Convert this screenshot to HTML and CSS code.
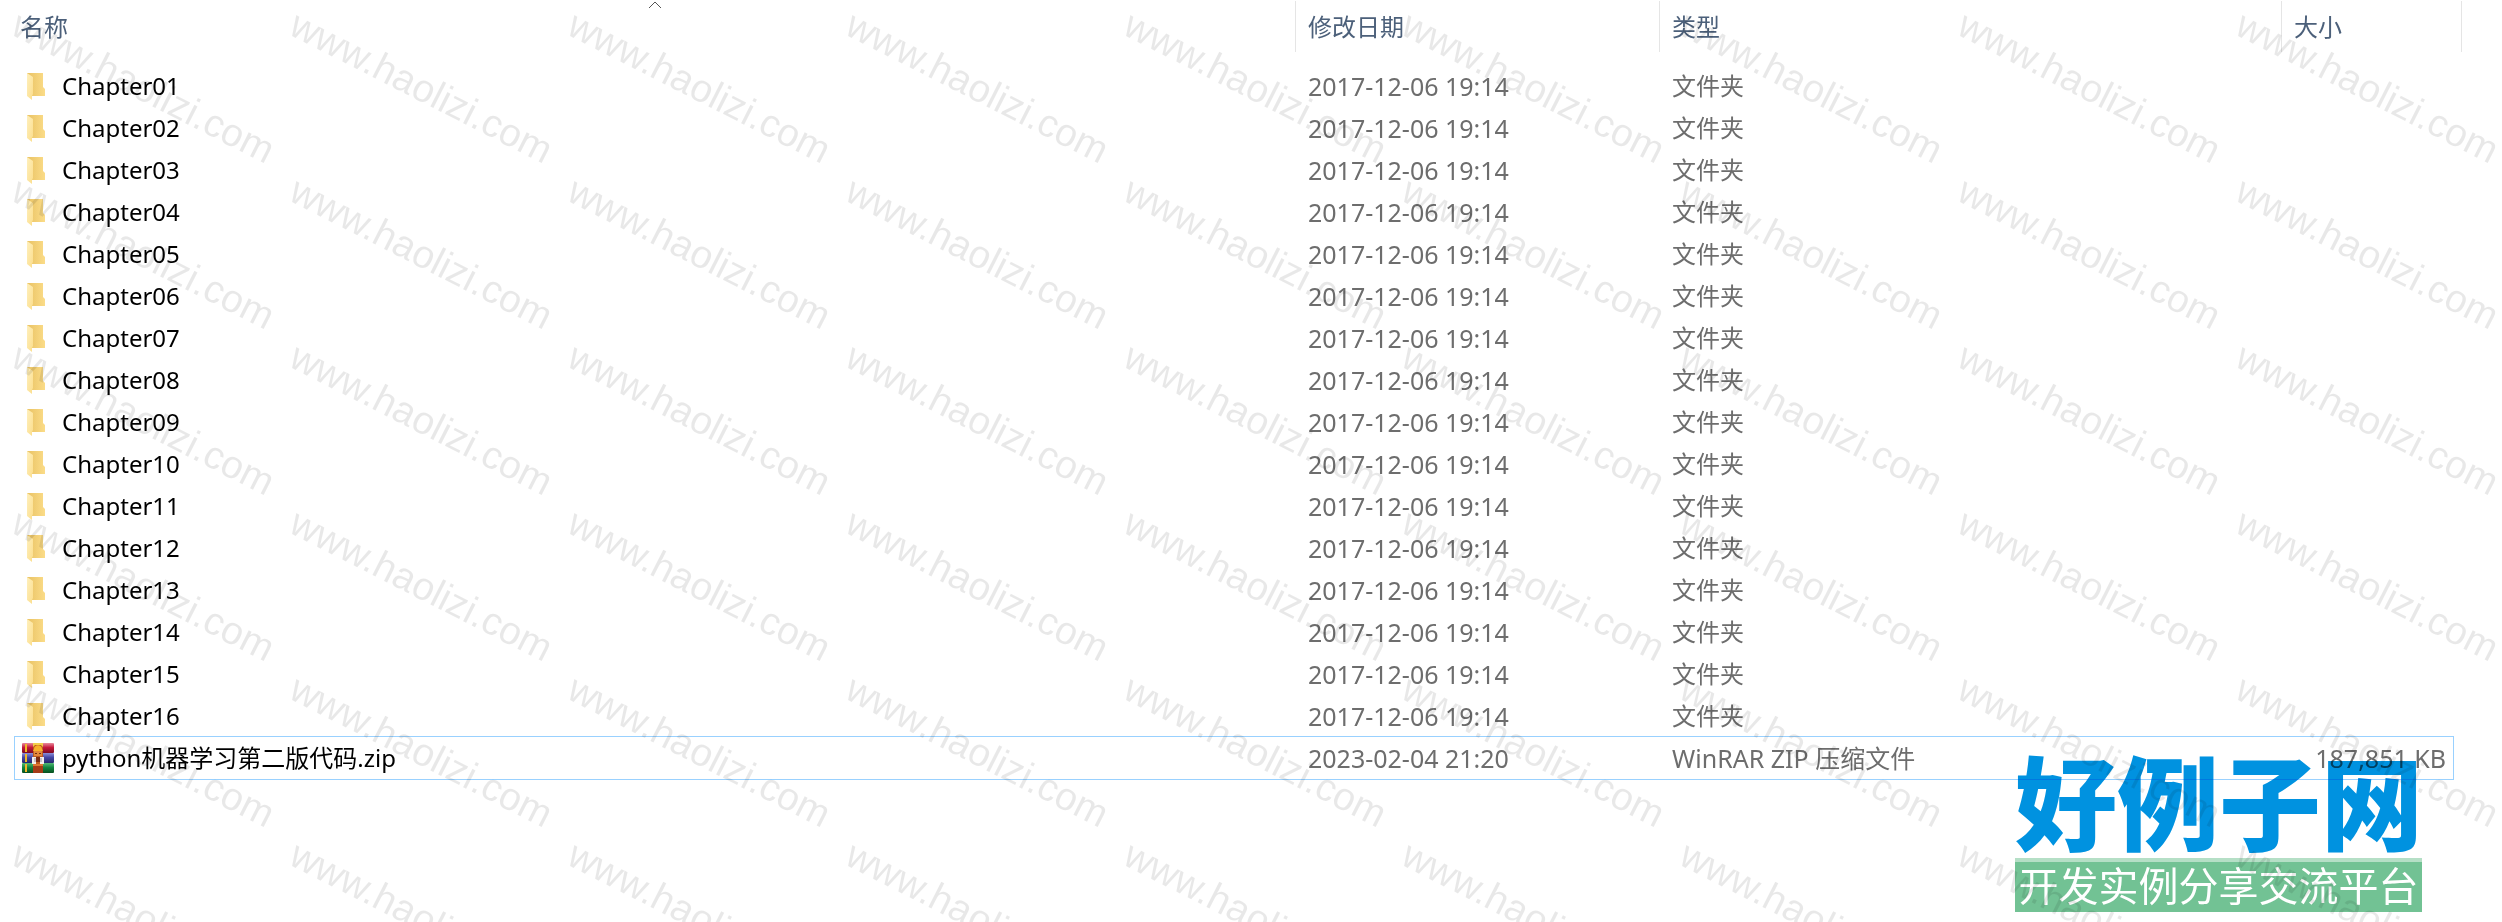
FILE: index.html
```html
<!DOCTYPE html>
<html lang="zh-CN">
<head>
    <meta charset="UTF-8">
    <meta name="viewport" content="width=device-width, initial-scale=1.0">
    <title>python机器学习第二版代码</title>
    <link rel="stylesheet" href="styles.css">
</head>
<body>

    <!-- Shared icons -->
    <svg class="icon-defs" aria-hidden="true">
        <defs>
            <linearGradient id="folderBack" x1="0" y1="0" x2="1" y2="0">
                <stop offset="0" stop-color="#e9c263"/>
                <stop offset="1" stop-color="#fbdc88"/>
            </linearGradient>
            <linearGradient id="folderFront" x1="0" y1="0" x2="1" y2="1">
                <stop offset="0" stop-color="#fff0bd"/>
                <stop offset="1" stop-color="#fbdd8b"/>
            </linearGradient>
            <linearGradient id="bookRed" x1="0" y1="0" x2="0" y2="1">
                <stop offset="0" stop-color="#e98a9c"/>
                <stop offset="0.45" stop-color="#c4183c"/>
                <stop offset="1" stop-color="#7c0a22"/>
            </linearGradient>
            <linearGradient id="bookBlue" x1="0" y1="0" x2="0" y2="1">
                <stop offset="0" stop-color="#8c8fd8"/>
                <stop offset="0.45" stop-color="#4447a5"/>
                <stop offset="1" stop-color="#25276c"/>
            </linearGradient>
            <linearGradient id="bookGreen" x1="0" y1="0" x2="0" y2="1">
                <stop offset="0" stop-color="#56b877"/>
                <stop offset="0.45" stop-color="#12853f"/>
                <stop offset="1" stop-color="#07501f"/>
            </linearGradient>
        </defs>
        <symbol id="folder" viewBox="0 0 32 32">
            <path d="M5 3h16v14l2 2v7H5z" fill="url(#folderBack)"/>
            <path d="M5 3l6 4v17l-1 2v4l-5-4z" fill="url(#folderFront)"/>
        </symbol>
        <symbol id="archive" viewBox="0 0 32 32">
            <rect x="0" y="1" width="32" height="10" rx="1" fill="url(#bookRed)"/>
            <rect x="0" y="11" width="32" height="10" rx="1" fill="url(#bookBlue)"/>
            <rect x="0" y="21" width="32" height="10" rx="1" fill="url(#bookGreen)"/>
            <path d="M3 2h2v8H3zM3 12h2v8H3zM3 22h2v8H3z" fill="#f2b728"/>
            <rect x="11" y="1" width="10" height="30" fill="#bd5a20"/>
            <path d="M11 1h10v4l-2-2h-6l-2 2z" fill="#f3cf4b"/>
            <path d="M12 7c0-5 8-5 8 0l1 2H11z" fill="#f6b02c"/>
            <rect x="12" y="9" width="8" height="5" fill="#e3873a"/>
            <path d="M13 11h2v1h-2zM17 11h2v1h-2z" fill="#6f2c10"/>
            <path d="M10 15h4v7h-4zM18 15h4v7h-4z" fill="#f3efec"/>
            <path d="M14 15h4v5h-4z" fill="#7c2c13"/>
            <path d="M12 16h2v4h-2zM18 16h2v4h-2z" fill="#c8c2c8"/>
            <path d="M11 22h10v2H11z" fill="#e07830"/>
            <path d="M11 24h10v7H11z" fill="#a53c17"/>
        </symbol>
    </svg>

    <!-- File list -->
    <table class="file-list">
        <colgroup>
            <col>
            <col class="col-date">
            <col class="col-type">
            <col class="col-size">
        </colgroup>
        <thead>
            <tr>
                <th class="sorted" aria-sort="ascending">
                    <button class="column-button" type="button">名称</button>
                    <svg class="sort-arrow" viewBox="0 0 14 8" aria-hidden="true"><path d="M1 7l6-6 6 6" fill="none" stroke="#555" stroke-width="1"/></svg>
                </th>
                <th><button class="column-button" type="button">修改日期</button></th>
                <th><button class="column-button" type="button">类型</button></th>
                <th><button class="column-button" type="button">大小</button></th>
            </tr>
        </thead>
        <tbody>
            <tr>
                <td><div class="name"><svg class="icon"><use href="#folder"/></svg>Chapter01</div></td>
                <td>2017-12-06 19:14</td><td class="type">文件夹</td><td></td>
            </tr>
            <tr>
                <td><div class="name"><svg class="icon"><use href="#folder"/></svg>Chapter02</div></td>
                <td>2017-12-06 19:14</td><td class="type">文件夹</td><td></td>
            </tr>
            <tr>
                <td><div class="name"><svg class="icon"><use href="#folder"/></svg>Chapter03</div></td>
                <td>2017-12-06 19:14</td><td class="type">文件夹</td><td></td>
            </tr>
            <tr>
                <td><div class="name"><svg class="icon"><use href="#folder"/></svg>Chapter04</div></td>
                <td>2017-12-06 19:14</td><td class="type">文件夹</td><td></td>
            </tr>
            <tr>
                <td><div class="name"><svg class="icon"><use href="#folder"/></svg>Chapter05</div></td>
                <td>2017-12-06 19:14</td><td class="type">文件夹</td><td></td>
            </tr>
            <tr>
                <td><div class="name"><svg class="icon"><use href="#folder"/></svg>Chapter06</div></td>
                <td>2017-12-06 19:14</td><td class="type">文件夹</td><td></td>
            </tr>
            <tr>
                <td><div class="name"><svg class="icon"><use href="#folder"/></svg>Chapter07</div></td>
                <td>2017-12-06 19:14</td><td class="type">文件夹</td><td></td>
            </tr>
            <tr>
                <td><div class="name"><svg class="icon"><use href="#folder"/></svg>Chapter08</div></td>
                <td>2017-12-06 19:14</td><td class="type">文件夹</td><td></td>
            </tr>
            <tr>
                <td><div class="name"><svg class="icon"><use href="#folder"/></svg>Chapter09</div></td>
                <td>2017-12-06 19:14</td><td class="type">文件夹</td><td></td>
            </tr>
            <tr>
                <td><div class="name"><svg class="icon"><use href="#folder"/></svg>Chapter10</div></td>
                <td>2017-12-06 19:14</td><td class="type">文件夹</td><td></td>
            </tr>
            <tr>
                <td><div class="name"><svg class="icon"><use href="#folder"/></svg>Chapter11</div></td>
                <td>2017-12-06 19:14</td><td class="type">文件夹</td><td></td>
            </tr>
            <tr>
                <td><div class="name"><svg class="icon"><use href="#folder"/></svg>Chapter12</div></td>
                <td>2017-12-06 19:14</td><td class="type">文件夹</td><td></td>
            </tr>
            <tr>
                <td><div class="name"><svg class="icon"><use href="#folder"/></svg>Chapter13</div></td>
                <td>2017-12-06 19:14</td><td class="type">文件夹</td><td></td>
            </tr>
            <tr>
                <td><div class="name"><svg class="icon"><use href="#folder"/></svg>Chapter14</div></td>
                <td>2017-12-06 19:14</td><td class="type">文件夹</td><td></td>
            </tr>
            <tr>
                <td><div class="name"><svg class="icon"><use href="#folder"/></svg>Chapter15</div></td>
                <td>2017-12-06 19:14</td><td class="type">文件夹</td><td></td>
            </tr>
            <tr>
                <td><div class="name"><svg class="icon"><use href="#folder"/></svg>Chapter16</div></td>
                <td>2017-12-06 19:14</td><td class="type">文件夹</td><td></td>
            </tr>
            <tr class="selected">
                <td><div class="name"><svg class="icon"><use href="#archive"/></svg>python机器学习第二版代码.zip</div></td>
                <td>2023-02-04 21:20</td><td>WinRAR ZIP 压缩文件</td><td class="size">187,851 KB</td>
            </tr>
        </tbody>
    </table>

    <!-- Site logo -->
    <div class="logo">
        <div class="logo-title">好例子网</div>
        <div class="logo-slogan">开发实例分享交流平台</div>
    </div>

    <!-- Watermark, filled by the script -->
    <div class="watermark" id="watermark" aria-hidden="true"></div>

    <script>
        // Repeat the site address over the whole page
        const watermark = document.getElementById('watermark');
        const cols = Math.ceil(window.innerWidth / 278);
        const rows = Math.ceil(window.innerHeight / 166);
        for (let i = 0; i < cols * rows; i++) {
            const mark = document.createElement('span');
            mark.textContent = 'www.haolizi.com';
            watermark.appendChild(mark);
        }
        watermark.style.gridTemplateColumns = `repeat(${cols}, 278px)`;
    </script>

</body>
</html>
```
FILE: styles.css
```css
* {
    box-sizing: border-box;
}
body {
    position: relative;
    min-height: 100vh;
    margin: 0;
    background-color: #fff;
    color: #6d6d6d;
    font-family: "Noto Sans", "Noto Sans CJK SC", sans-serif;
    font-size: 24px;
    line-height: 32px;
}
.icon-defs {
    position: absolute;
    width: 0;
    height: 0;
}

/* File list */
.file-list {
    width: calc(100% - 40px);
    table-layout: fixed;
    border-collapse: collapse;
}
.col-date {
    width: 364px;
}
.col-type {
    width: 622px;
}
.col-size {
    width: 180px;
}
th {
    position: relative;
    height: 65px;
    padding: 1px 0 0;
    vertical-align: top;
    text-align: left;
}
.column-button {
    display: block;
    width: 100%;
    height: 51px;
    padding: 0 12px;
    border: none;
    border-right: 1px solid #e5e5e5;
    background: none;
    color: #4c607a;
    font: inherit;
    font-weight: normal;
    text-align: left;
}
.sorted .column-button {
    padding-left: 20px;
}
.sort-arrow {
    position: absolute;
    top: 1px;
    left: 50%;
    width: 14px;
    height: 8px;
}
td {
    height: 42px;
    padding: 0 12px;
    font-size: 25px;
    white-space: nowrap;
}
td:first-child {
    padding-left: 22px;
}
.name {
    display: flex;
    align-items: center;
    gap: 8px;
    color: #000;
    font-size: 24px;
}
.icon {
    width: 32px;
    height: 32px;
}
.type {
    font-size: 24px;
}
.size {
    padding-right: 16px;
    text-align: right;
}
.selected {
    position: relative;
}
/* Outline of the whole row */
.selected td:first-child::after {
    content: "";
    position: absolute;
    inset: -1px 8px -1px 14px;
    border: 1px solid #99d1ff;
}

/* Logo in the bottom right corner, the list shows through it */
.logo {
    position: absolute;
    right: 80px;
    bottom: 10px;
    width: 407px;
    font-family: "Noto Sans CJK SC", sans-serif;
    text-align: center;
    white-space: nowrap;
    mix-blend-mode: multiply;
}
.logo-title {
    padding-bottom: 4px;
    color: #0092e0;
    font-size: 102px;
    font-weight: 900;
    line-height: 110px;
}
.logo-slogan {
    height: 54px;
    border-top: 4px solid #b5dfc6;
    background-color: #72c294;
    color: #fff;
    font-size: 40px;
    line-height: 44px;
}

/* Watermark */
.watermark {
    position: absolute;
    inset: 0;
    display: grid;
    grid-auto-rows: 166px;
    padding: 4px 0 0 24px;
    overflow: hidden;
    color: rgba(0, 0, 0, 0.09);
    font-family: "Liberation Sans", Arial, sans-serif;
    font-size: 39px;
    line-height: 40px;
    pointer-events: none;
}
.watermark span {
    transform: rotate(27deg);
    transform-origin: 0 0;
}
```
